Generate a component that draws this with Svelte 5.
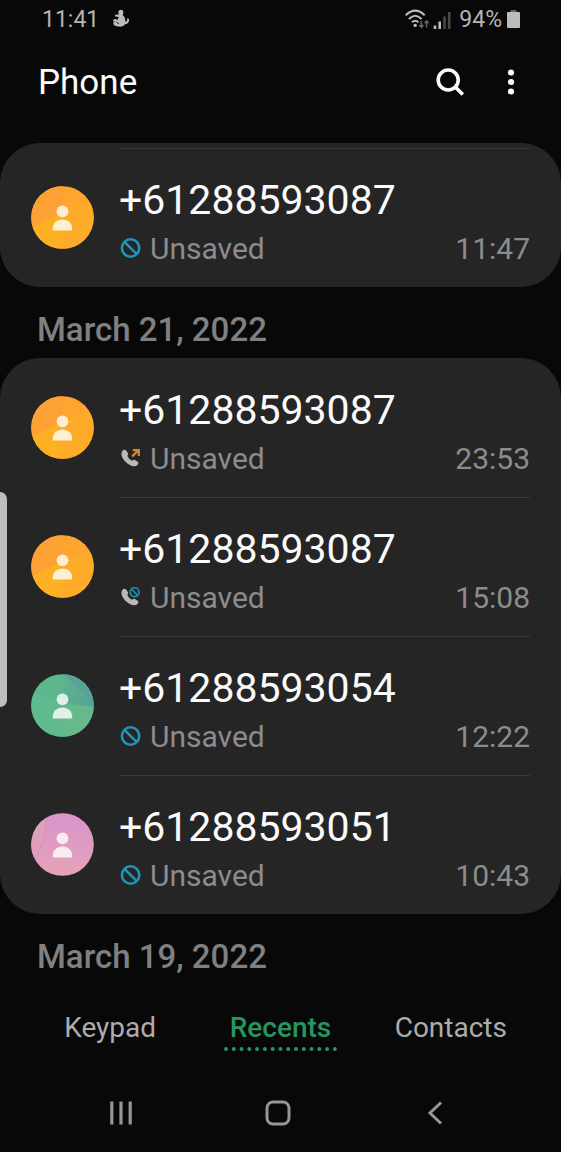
<script>
	const groups = [
		{
			date: "",
			scrolled: true,
			calls: [
				{ number: "+61288593087", time: "11:47", type: "blocked", color: "orange" },
			],
		},
		{
			date: "March 21, 2022",
			calls: [
				{ number: "+61288593087", time: "23:53", type: "outgoing", color: "orange" },
				{ number: "+61288593087", time: "15:08", type: "rejected", color: "orange" },
				{ number: "+61288593054", time: "12:22", type: "blocked", color: "green" },
				{ number: "+61288593051", time: "10:43", type: "blocked", color: "pink" },
			],
		},
		{ date: "March 19, 2022", calls: [] },
	];

	const tabs = ["Keypad", "Recents", "Contacts"];
	let activeTab = $state("Recents");
</script>

{#snippet avatar(color)}
	<svg class="avatar" viewBox="0 0 63 63" aria-hidden="true">
		<defs>
			<clipPath id="disc"><circle cx="31.5" cy="31.5" r="31.3" /></clipPath>
			<linearGradient id="pink" x1="0" y1="0" x2="0" y2="1">
				<stop offset="0" stop-color="#d795cb" />
				<stop offset="1" stop-color="#e5a3b8" />
			</linearGradient>
			<linearGradient id="teal" x1="0" y1="0" x2="1" y2="1">
				<stop offset="0" stop-color="#5db48d" />
				<stop offset="1" stop-color="#57a399" />
			</linearGradient>
		</defs>
		<g clip-path="url(#disc)">
			{#if color === "orange"}
				<rect width="63" height="63" fill="#fda52e" />
				<path d="M0 0H31.5V31.5L0 44Z" fill="#fda134" />
				<path d="M0 42L31.5 26V63H0Z" fill="#fdb022" />
				<path d="M31.5 26L63 14V63H31.5Z" fill="#fdab29" />
			{:else if color === "green"}
				<rect width="63" height="63" fill="#5db68c" />
				<path d="M0 20L31.5 26V63H0Z" fill="#60ba90" />
				<path d="M31.5 30L63 33V63H31.5Z" fill="#65b98b" />
				<path d="M31.5 0L63 33L36 29L31.5 24Z" fill="url(#teal)" />
				<path d="M33 0H63V33Z" fill="#58a298" />
			{:else}
				<rect width="63" height="63" fill="url(#pink)" />
				<path d="M0 0H15Q17 24 4 46H0Z" fill="#e0a0bb" />
				<path d="M15 0Q17 24 4 46" fill="none" stroke="#cb8cb0" stroke-width="0.6" />
			{/if}
		</g>
		<g fill="#fff" opacity="0.8">
			<circle cx="31.5" cy="25.3" r="5.9" />
			<path d="M21.8 44.5V42.6C21.8 37 26 33.4 31.5 33.4S41.2 37 41.2 42.6V44.5Z" />
		</g>
	</svg>
{/snippet}

{#snippet callIcon(type)}
	<svg class="call-icon" viewBox="0 1 22 22" role="img" aria-label={type}>
		{#if type === "blocked"}
			<g fill="none" stroke="#2194b8" stroke-width="2.6">
				<circle cx="11.6" cy="11" r="8.7" />
				<path d="M5.4 4.8L17.8 17.2" />
			</g>
		{:else}
			<path
				d="M3.4 4C4.4 2.5 6.4 2.4 7.3 3.7L8.8 5.9C9.5 7 9.1 8 8.3 8.8C9 11 11 13 13.3 13.7C14.3 12.7 15.3 12.6 16.3 13.3L18.7 14.8C19.8 15.7 19.5 17.3 18.2 18.3C15.8 20.5 11.1 19.1 7.2 15.5C3.3 11.8 1.1 6.9 3.4 4Z"
				fill="#b9b9b9"
			/>
			{#if type === "outgoing"}
				<path
					d="M13.2 9.4L19.5 3.1M13.8 3.1H19.8V9"
					fill="none"
					stroke="#d08a32"
					stroke-width="2.2"
				/>
			{:else}
				<g fill="none" stroke="#2189aa" stroke-width="1.8">
					<circle cx="15.6" cy="6.2" r="4.5" />
					<path d="M12.5 3.1L18.7 9.3" />
				</g>
			{/if}
		{/if}
	</svg>
{/snippet}

<div class="screen">
	<div class="status-bar">
		<span>11:41</span>
		<svg class="notification" width="18" height="20" viewBox="0 0 18 20" aria-hidden="true">
			<path
				d="M6.3 3.4C6.5 1.5 8 .7 9.4 .9C11 1.1 11.8 2.6 11.3 4.2C11 5.1 10.7 5.6 10.7 6.3C12.6 7.5 13.5 9.7 13.2 12.4C14.7 12.6 15.2 11.9 15.2 10.7L14.6 9.4L17 9.8C17.5 13 16 15.1 13 15.2C12.1 17 9.9 17.8 7.2 17.6C4 17.5 1.4 16.2 1.3 14.5C1.2 13.3 2.4 12.7 3.6 12.8C2.4 11.9 1.5 12.1 1 13C.6 11.4 1.5 9.9 3.3 9.9C4.1 9.9 4.9 10.3 5.5 10.9L6.7 7.9L3.2 7.5L2.9 5.8L6.8 5.5Z"
				fill="#bcbcbc"
			/>
			<path d="M4.6 13.1L6.8 14.8" stroke="#080808" stroke-width="1" />
		</svg>
		<div class="status-right">
			<svg width="49" height="22" viewBox="0 0 49 22" aria-hidden="true">
				<g fill="none" stroke="#bcbcbc" stroke-width="2.1">
					<path d="M.7 7.2Q10.2 -2 19.7 7.2" />
					<path d="M3.9 10.9Q10.2 4.6 16.5 10.9" />
					<path d="M7 14.3Q10.2 11.2 13.4 14.3" />
				</g>
				<circle cx="10.2" cy="17.4" r="1.7" fill="#bcbcbc" />
				<path
					d="M16.4 13V19M14.4 17L16.4 19.3L18.4 17M21.6 19.5V13.2M19.6 15.2L21.6 12.9L23.6 15.2"
					fill="none"
					stroke="#646464"
					stroke-width="1.5"
				/>
				<path d="M30 17.5V21M34.7 13.5V21" stroke="#bcbcbc" stroke-width="2.6" />
				<path d="M39.5 8.5V21M44.2 4V21" stroke="#484848" stroke-width="2.6" />
			</svg>
			<span>94%</span>
			<svg width="13" height="20" viewBox="0 0 13 20" aria-hidden="true">
				<path d="M3.5 1H9.5V3H3.5Z" fill="#666" />
				<rect y="3" width="13" height="16" rx="1" fill="#bcbcbc" />
			</svg>
		</div>
	</div>

	<header class="app-bar">
		<h1>Phone</h1>
		<div class="actions">
			<button type="button" aria-label="Search">
				<svg width="30" height="30" viewBox="0 0 30 30">
					<g fill="none" stroke="#fafafa" stroke-width="3.6">
						<circle cx="13.2" cy="13" r="10" />
						<path d="M20.3 20.1L27.8 27.6" />
					</g>
				</svg>
			</button>
			<button type="button" aria-label="More options">
				<svg width="30" height="30" viewBox="0 0 30 30">
					<g fill="#fafafa">
						<circle cx="15" cy="5.5" r="3.1" />
						<circle cx="15" cy="15" r="3.1" />
						<circle cx="15" cy="24.5" r="3.1" />
					</g>
				</svg>
			</button>
		</div>
	</header>

	<main>
		{#each groups as group}
			{#if group.date}<h2>{group.date}</h2>{/if}
			{#if group.calls.length > 0}
				<ul class="card" class:scrolled={group.scrolled}>
					{#each group.calls as call}
						<li class="call">
							{@render avatar(call.color)}
							<div class="call-body">
								<div class="number">{call.number}</div>
								<div class="details">
									{@render callIcon(call.type)}
									<span>Unsaved</span>
									<time>{call.time}</time>
								</div>
							</div>
						</li>
					{/each}
				</ul>
			{/if}
		{/each}
	</main>

	<nav class="tabs">
		{#each tabs as tab}
			<button
				type="button"
				class:active={tab === activeTab}
				onclick={() => (activeTab = tab)}
			>
				<span>{tab}</span>
			</button>
		{/each}
	</nav>

	<div class="system-nav">
		<button type="button" aria-label="Recent apps">
			<svg width="30" height="30" viewBox="0 0 30 30">
				<path d="M5.8 3.5V26.5M15 3.5V26.5M24.2 3.5V26.5" stroke="#969696" stroke-width="3.2" />
			</svg>
		</button>
		<button type="button" aria-label="Home">
			<svg width="30" height="30" viewBox="0 0 30 30">
				<rect x="4" y="4" width="22" height="22" rx="6" fill="none" stroke="#969696" stroke-width="3" />
			</svg>
		</button>
		<button type="button" aria-label="Back">
			<svg width="30" height="30" viewBox="0 0 30 30">
				<path d="M21 4.5L10 15L21 25.5" fill="none" stroke="#969696" stroke-width="3" />
			</svg>
		</button>
	</div>

	<div class="edge-handle"></div>
</div>

<style>
	:global(body) {
		background: #080808;
	}
	.screen {
		position: relative;
		display: flex;
		flex-direction: column;
		min-height: 100vh;
		background: #080808;
		color: #fafafa;
		font-family: Roboto, "Liberation Sans", sans-serif;
	}
	button {
		padding: 0;
		border: 0;
		background: none;
		color: inherit;
		font: inherit;
		cursor: pointer;
	}
	svg {
		display: block;
		flex: none;
	}
	.status-bar {
		display: flex;
		align-items: center;
		height: 38px;
		padding: 0 41px 0 42px;
		color: #b4b4b4;
		font-size: 23px;
	}
	.notification {
		margin-left: 13px;
	}
	.status-right {
		display: flex;
		align-items: center;
		gap: 5px;
		margin-left: auto;
	}
	.app-bar {
		display: flex;
		align-items: center;
		justify-content: space-between;
		padding: 19px 35px 36px 38px;
	}
	h1 {
		margin: 0;
		padding-top: 2px;
		font-size: 35px;
		font-weight: 400;
		line-height: 48px;
	}
	.actions {
		display: flex;
		gap: 31px;
	}
	h2 {
		margin: 0;
		padding: 23px 37px 8px;
		color: #808080;
		font-size: 33px;
		font-weight: 500;
		line-height: 40px;
	}
	.card {
		margin: 0;
		padding: 0;
		border-radius: 40px;
		background: #252525;
		list-style: none;
	}
	.call {
		display: flex;
		align-items: center;
		gap: 25px;
		padding: 0 31px;
	}
	.avatar {
		width: 63px;
		height: 63px;
	}
	.call-body {
		flex: 1;
		padding: 26px 0 15px;
		border-top: 1px solid transparent;
	}
	.call + .call .call-body,
	.scrolled .call-body {
		border-top-color: #3a3a3a;
	}
	.scrolled {
		padding-top: 5px;
	}
	.number {
		font-size: 41px;
		line-height: 50px;
	}
	.details {
		display: flex;
		align-items: center;
		gap: 9px;
		color: #8c8c8c;
		font-size: 30px;
		line-height: 47px;
	}
	.call-icon {
		width: 22px;
		height: 22px;
	}
	time {
		margin-left: auto;
	}
	.tabs {
		display: grid;
		grid-template-columns: repeat(3, 1fr);
		margin-top: auto;
		padding: 26px 25px 24px;
		color: #acacac;
		font-size: 28px;
		line-height: 34px;
	}
	.tabs span {
		display: inline-block;
		padding: 0 6px 2px;
		border-bottom: 4px dotted transparent;
	}
	.tabs .active {
		color: #26965f;
		font-weight: 500;
	}
	.tabs .active span {
		border-bottom-color: #26965f;
	}
	.system-nav {
		display: grid;
		grid-template-columns: repeat(3, 1fr);
		justify-items: center;
		padding: 23px 48px 24px 42px;
	}
	.edge-handle {
		position: absolute;
		top: 492px;
		left: 0;
		width: 7px;
		height: 215px;
		border-radius: 0 7px 7px 0;
		background: #bebebe;
	}
</style>
